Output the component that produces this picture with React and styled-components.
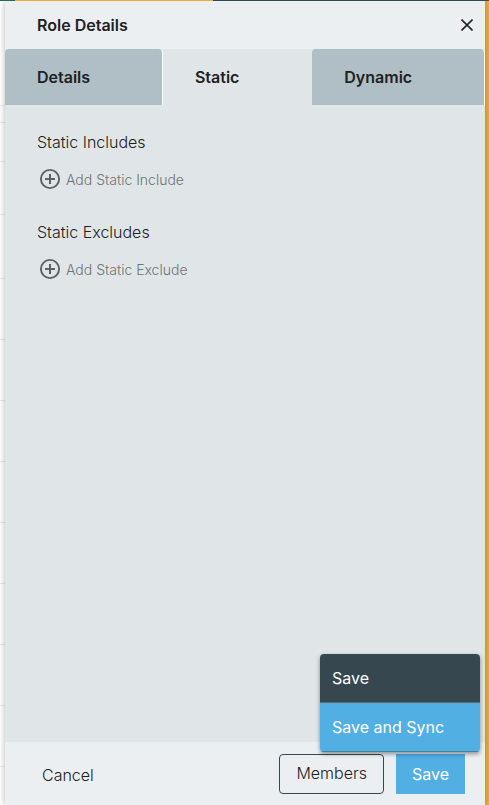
import React from "react";
import styled, { createGlobalStyle } from "styled-components";

const GlobalStyle = createGlobalStyle`
  *, *::before, *::after { box-sizing: border-box; }
  body { margin: 0; background: #fff; color: #212121; font: 300 16px/24px Inter, "Liberation Sans", sans-serif; }
  button { margin: 0; border: 0; padding: 0; background: none; color: inherit; font: inherit; cursor: pointer; }
  h1, h2 { margin: 0; }
`;

const Page = styled.div`
  min-height: 100vh;
  display: flex;
  flex-direction: column;
`;

const AppBar = styled.div`
  position: relative;
  z-index: 1;
  display: flex;
  height: 1px;
`;

const BarPart = styled.span`
  flex: ${({ $grow }) => $grow} 1 0;
  background: ${({ $color }) => $color};
`;

const Body = styled.div`
  flex: 1;
  display: grid;
  grid-template-columns: 5px minmax(0, 1fr) 4px;
`;

const Backdrop = styled.div`
  display: flex;
  flex-direction: column;
`;

const BackdropRow = styled.div`
  height: ${({ $height }) => $height}px;
  border-bottom: 1px solid #ececec;
`;

const Rail = styled.div`
  background: #f5ad33;
`;

const Panel = styled.section`
  position: relative;
  display: flex;
  flex-direction: column;
  background: #e0e5e8;
  box-shadow: 0 0 6px rgba(0, 0, 0, 0.3);
`;

const Header = styled.header`
  display: flex;
  align-items: center;
  justify-content: space-between;
  height: 48px;
  padding: 0 8px 0 32px;
  background: #ebeff2;
`;

const Title = styled.h1`
  font-size: 16px;
  font-weight: 600;
`;

const CloseButton = styled.button`
  display: grid;
  place-items: center;
  width: 20px;
  height: 24px;
`;

const Tabs = styled.div`
  display: flex;
  height: 56px;
`;

const Tab = styled.button`
  && {
    flex: 1 1 auto;
    padding: 0 32px;
    border-right: 1px solid ${({ $active }) => ($active ? "#e0e5e8" : "#fff")};
    border-radius: 4px 4px 0 0;
    background: ${({ $active }) => ($active ? "#e0e5e8" : "#b0bec5")};
    background-clip: padding-box;
    font-weight: 600;
    text-align: left;
  }
`;

const Content = styled.main`
  flex: 1;
  padding: 25px 32px;
`;

const Group = styled.section`
  height: 90px;
`;

const GroupTitle = styled.h2`
  font-size: 16px;
  font-weight: 300;
  line-height: 24px;
`;

const AddButton = styled.button`
  && {
    display: flex;
    align-items: center;
    gap: 5px;
    margin-top: 12px;
    padding-left: 2px;
    color: #6f7477;
    font-size: 14px;
    line-height: 26px;
  }
`;

const AddLabel = styled.span`
  padding-top: 2px;
  line-height: 24px;
`;

const Footer = styled.footer`
  display: flex;
  align-items: center;
  gap: 12px;
  padding: 12px 20px 11px 37px;
  background: #ebeff2;
`;

const CancelButton = styled.button`
  && {
    margin-right: auto;
    padding-top: 2px;
  }
`;

const MembersButton = styled.button`
  && {
    height: 40px;
    padding: 0 16px 2px;
    border: 1px solid #37474f;
    border-radius: 4px;
  }
`;

const SaveGroup = styled.div`
  position: relative;
`;

const SaveButton = styled.button`
  && {
    height: 40px;
    padding: 0 16px;
    background: #51afe4;
    color: #fff;
    font-weight: 400;
  }
`;

const Menu = styled.div`
  position: absolute;
  right: -15px;
  bottom: calc(100% + 2px);
  width: 160px;
  overflow: hidden;
  border-radius: 4px;
  box-shadow: 0 2px 4px rgba(0, 0, 0, 0.4);
`;

const MenuItem = styled.button`
  && {
    display: block;
    width: 100%;
    height: 49px;
    padding: 0 12px;
    border-bottom: 1px solid ${({ $highlighted }) => ($highlighted ? "#41819f" : "#606b70")};
    background: ${({ $highlighted }) => ($highlighted ? "#51afe4" : "#37474f")};
    color: #fff;
    font-weight: 400;
    text-align: left;
  }
`;

const CloseIcon = () => (
  <svg width="12" height="12" viewBox="0 0 12 12" fill="none" stroke="#212121" strokeWidth="1.6" aria-hidden="true">
    <path d="M.5.5l11 11M11.5.5l-11 11" />
  </svg>
);

const PlusIcon = () => (
  <svg width="22" height="22" viewBox="0 0 22 22" fill="none" stroke="#5c6165" aria-hidden="true">
    <circle cx="11" cy="11" r="9.1" strokeWidth="1.9" />
    <path d="M11 6v10M6 11h10" strokeWidth="2" />
  </svg>
);

const groups = [
  { title: "Static Includes", action: "Add Static Include" },
  { title: "Static Excludes", action: "Add Static Exclude" },
];

const rowHeights = [105, 17, 39, 53, 64, 61, 61, 61, 61, 61, 61, 61, 61];

export default function App() {
  return (
    <Page>
      <GlobalStyle />
      <AppBar>
        <BarPart $grow={15} $color="#1f6b50" />
        <BarPart $grow={198} $color="#f0a933" />
        <BarPart $grow={276} $color="#37474f" />
      </AppBar>
      <Body>
        <Backdrop>
          {rowHeights.map((height, i) => <BackdropRow key={i} $height={height} />)}
        </Backdrop>
        <Panel>
          <Header>
            <Title>Role Details</Title>
            <CloseButton aria-label="Close"><CloseIcon /></CloseButton>
          </Header>
          <Tabs role="tablist">
            {["Details", "Static", "Dynamic"].map((name) => (
              <Tab key={name} role="tab" aria-selected={name === "Static"} $active={name === "Static"}>{name}</Tab>
            ))}
          </Tabs>
          <Content>
            {groups.map(({ title, action }) => (
              <Group key={title}>
                <GroupTitle>{title}</GroupTitle>
                <AddButton><PlusIcon /><AddLabel>{action}</AddLabel></AddButton>
              </Group>
            ))}
          </Content>
          <Footer>
            <CancelButton>Cancel</CancelButton>
            <MembersButton>Members</MembersButton>
            <SaveGroup>
              <SaveButton aria-haspopup="menu" aria-expanded="true">Save</SaveButton>
              <Menu role="menu">
                <MenuItem role="menuitem">Save</MenuItem>
                <MenuItem role="menuitem" $highlighted>Save and Sync</MenuItem>
              </Menu>
            </SaveGroup>
          </Footer>
        </Panel>
        <Rail />
      </Body>
    </Page>
  );
}
